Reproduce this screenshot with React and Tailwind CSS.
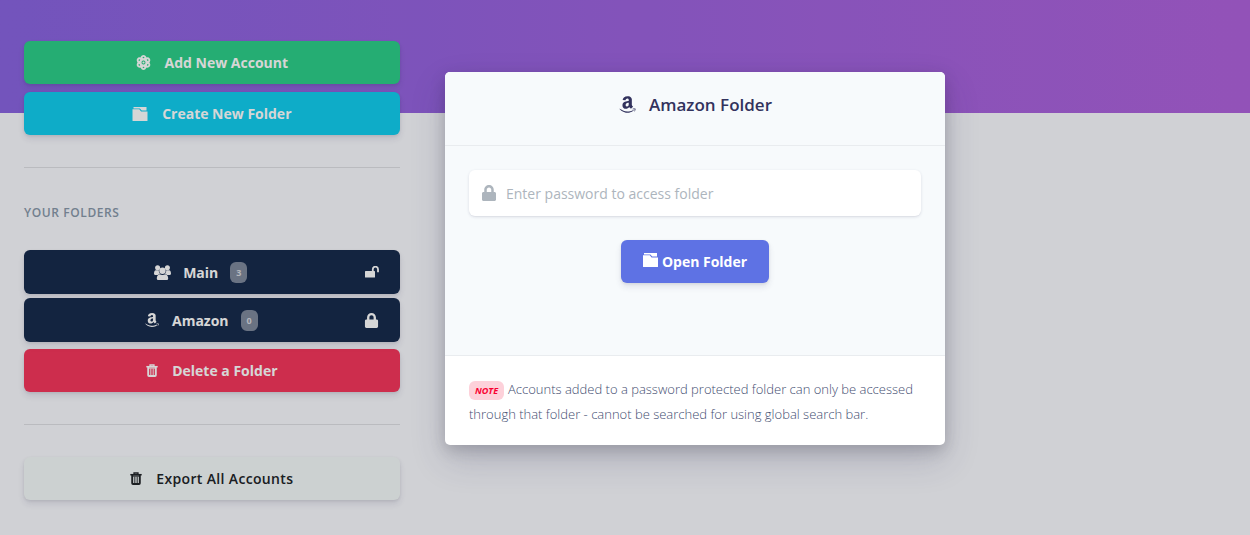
import React from "react";
import { FaAmazon, FaLock } from "react-icons/fa";

function AtomIcon({ className }) {
  return (
    <svg viewBox="0 0 14 14" className={className} fill="none" stroke="currentColor" strokeWidth="1.6" aria-hidden="true">
      <ellipse cx="7" cy="7" rx="2.600" ry="6.100" />
      <ellipse cx="7" cy="7" rx="2.600" ry="6.100" transform="rotate(60 7 7)" />
      <ellipse cx="7" cy="7" rx="2.600" ry="6.100" transform="rotate(120 7 7)" />
      <circle cx="7" cy="7" r="1" fill="currentColor" stroke="none" />
    </svg>
  );
}

function FolderIcon({ className }) {
  return (
    <svg viewBox="0 0 15 14" className={className} fill="currentColor" aria-hidden="true">
      <path d="M1 0h13v3.600H9.200L7.400 1.500H1z" />
      <path d="M0 2.200h6.800L8.600 4.400H15V13.500a.5.5 0 0 1-.5.5H.5a.5.5 0 0 1-.5-.5z" />
    </svg>
  );
}

function UsersIcon({ className }) {
  return (
    <svg viewBox="0 0 17 15" className={className} fill="currentColor" aria-hidden="true">
      <circle cx="3.600" cy="2.700" r="2.500" />
      <circle cx="13.400" cy="2.700" r="2.500" />
      <path d="M1.800 5.200h3a4.200 4.200 0 0 0 1.200 3.500c-.9.300-1.500.7-2 1.200H1.200C.4 9.900 0 9.400 0 8.700 0 6.700.6 5.400 1.800 5.200z" />
      <path d="M15.200 5.200h-3a4.200 4.200 0 0 1-1.200 3.500c.9.300 1.500.7 2 1.200h2.800c.8 0 1.200-.5 1.200-1.200 0-2-.6-3.300-1.800-3.500z" />
      <circle cx="8.500" cy="5.700" r="3.200" />
      <path d="M5.700 9.200c1.700 1 3.900 1 5.600 0 2 .3 2.900 2.200 2.900 4.300 0 .9-.5 1.500-1.400 1.500H4.200c-.9 0-1.400-.6-1.400-1.500 0-2.100.9-4 2.900-4.300z" />
    </svg>
  );
}

function TrashIcon({ className }) {
  return (
    <svg viewBox="0 0 12 13" className={className} fill="none" stroke="currentColor" aria-hidden="true">
      <path d="M4 2.200V1h4v1.200" strokeWidth="1.300" />
      <path d="M.3 2.700h11.400" strokeWidth="1.500" />
      <path d="M2.200 3v8.200q0 .8.800.8h6q.8 0 .8-.8V3" strokeWidth="1.900" />
      <path d="M3 4h6" strokeWidth="1.200" />
      <path d="M4.500 4.500v7M6 4.500v7M7.500 4.500v7" strokeWidth="1" strokeOpacity=".65" />
    </svg>
  );
}

function UnlockIcon({ className }) {
  return (
    <svg viewBox="0 0 14 12" className={className} fill="currentColor" aria-hidden="true">
      <rect x="0" y="5" width="10" height="6.500" rx=".6" />
      <path d="M7.800 5.500V3.300a2.600 2.600 0 0 1 5.200 0v2.900" fill="none" stroke="currentColor" strokeWidth="1.800" />
    </svg>
  );
}

const buttonBase =
  "flex w-full items-center justify-center rounded-md text-sm leading-[21px] shadow-[0_4px_6px_rgba(50,50,93,0.11),0_1px_3px_rgba(0,0,0,0.08)]";

function FolderButton({ icon, name, count, status }) {
  return (
    <button type="button" className={`${buttonBase} min-h-11 bg-[#172b4d] pr-5 pl-[14px] font-bold text-white`}>
      <span className="flex flex-1 items-center justify-center gap-3">
        {icon}
        <span>{name}</span>
        <span className="rounded-md bg-white/45 px-[6px] text-[9px] font-bold text-white/70">{count}</span>
      </span>
      <span className="flex w-4 justify-center">{status}</span>
    </button>
  );
}

export default function App() {
  return (
    <div className="relative min-h-screen bg-[#f8f9fe] font-['Open_Sans',sans-serif]">
      <div className="grid">
        <div className="col-start-1 row-start-1 h-[113px] bg-[linear-gradient(87deg,#8965e0,#af62dc)]" />
        <aside className="col-start-1 row-start-1 w-1/3 pt-[41px] pr-[17px] pb-8 pl-6">
          <div className="flex flex-col gap-2">
            <button type="button" className={`${buttonBase} gap-3.5 bg-[#2dce89] py-[11px] font-bold text-white`}>
              <AtomIcon className="size-[15px]" />
              Add New Account
            </button>
            <button type="button" className={`${buttonBase} gap-3.5 bg-[#11cdef] py-[11px] font-bold text-white`}>
              <FolderIcon className="h-[14px] w-4" />
              Create New Folder
            </button>
          </div>
          <hr className="my-8 border-black/10" />
          <h2 className="mt-9 mb-7 text-xs leading-[18px] font-semibold tracking-wider text-[#8898aa] uppercase">Your Folders</h2>
          <div className="flex flex-col gap-1">
            <FolderButton icon={<UsersIcon className="h-[15px] w-[17px]" />} name="Main" count={3} status={<UnlockIcon className="h-3 w-[14px]" />} />
            <FolderButton icon={<FaAmazon className="size-4" />} name="Amazon" count={0} status={<FaLock className="size-[15px]" />} />
          </div>
          <button type="button" className={`${buttonBase} mt-[7px] gap-3.5 bg-[#f5365c] py-[11px] font-bold text-white`}>
            <TrashIcon className="h-[13px] w-3" />
            Delete a Folder
          </button>
          <hr className="my-8 border-black/10" />
          <button type="button" className={`${buttonBase} gap-3.5 bg-[#f4f9f9] py-[11px] font-semibold tracking-wide text-[#212529]`}>
            <TrashIcon className="h-[13px] w-3" />
            Export All Accounts
          </button>
        </aside>
      </div>

      <div className="absolute inset-0 flex items-start justify-center bg-black/16 pt-[72px] pl-[140px]">
        <section
          role="dialog"
          aria-modal="true"
          aria-labelledby="dialog-title"
          className="w-full max-w-[500px] overflow-hidden rounded-[5px] bg-white shadow-[0_15px_35px_rgba(50,50,93,0.2),0_5px_15px_rgba(0,0,0,0.17)]"
        >
          <header className="flex items-center justify-center gap-3 border-b border-[#e9ecef] bg-[#f7fafc] pt-5 pb-7 text-[#32325d]">
            <FaAmazon className="size-[19px]" />
            <h1 id="dialog-title" className="text-[17px] leading-[25px] font-semibold">Amazon Folder</h1>
          </header>
          <form className="flex flex-col items-center bg-[#f7fafc] px-6 pt-6 pb-[72px]" onSubmit={(e) => e.preventDefault()}>
            <label className="flex h-[46px] w-full items-center rounded-md bg-white px-3 text-[#adb5bd] shadow-[0_1px_3px_rgba(50,50,93,0.15),0_1px_0_rgba(0,0,0,0.02)]">
              <FaLock className="size-4" />
              <input
                type="password"
                aria-label="Folder password"
                placeholder="Enter password to access folder"
                className="ml-[9px] min-w-0 flex-1 bg-transparent pt-px text-sm text-[#525f7f] outline-none placeholder:text-[#adb5bd]"
              />
            </label>
            <button
              type="submit"
              className="mt-6 flex items-center gap-1 rounded-md bg-[#5e72e4] px-[22px] py-[11px] text-sm leading-[21px] font-bold text-white shadow-[0_4px_6px_rgba(50,50,93,0.11),0_1px_3px_rgba(0,0,0,0.08)]"
            >
              <FolderIcon className="mb-1 h-[14px] w-[15px]" />
              Open Folder
            </button>
          </form>
          <footer className="border-t border-[#e9ecef] px-6 pt-[21px] pb-[18px]">
            <p className="text-[13px] leading-[25px] font-light text-[#3f4d70]">
              <em className="mr-1 inline-block rounded-md bg-[#fdd1da] px-[6px] py-[5px] align-middle text-[9px] leading-[9px] font-bold text-[#f80031] uppercase">Note</em>
              Accounts added to a password protected folder can only be accessed through that folder - cannot be searched for using global search bar.
            </p>
          </footer>
        </section>
      </div>
    </div>
  );
}
